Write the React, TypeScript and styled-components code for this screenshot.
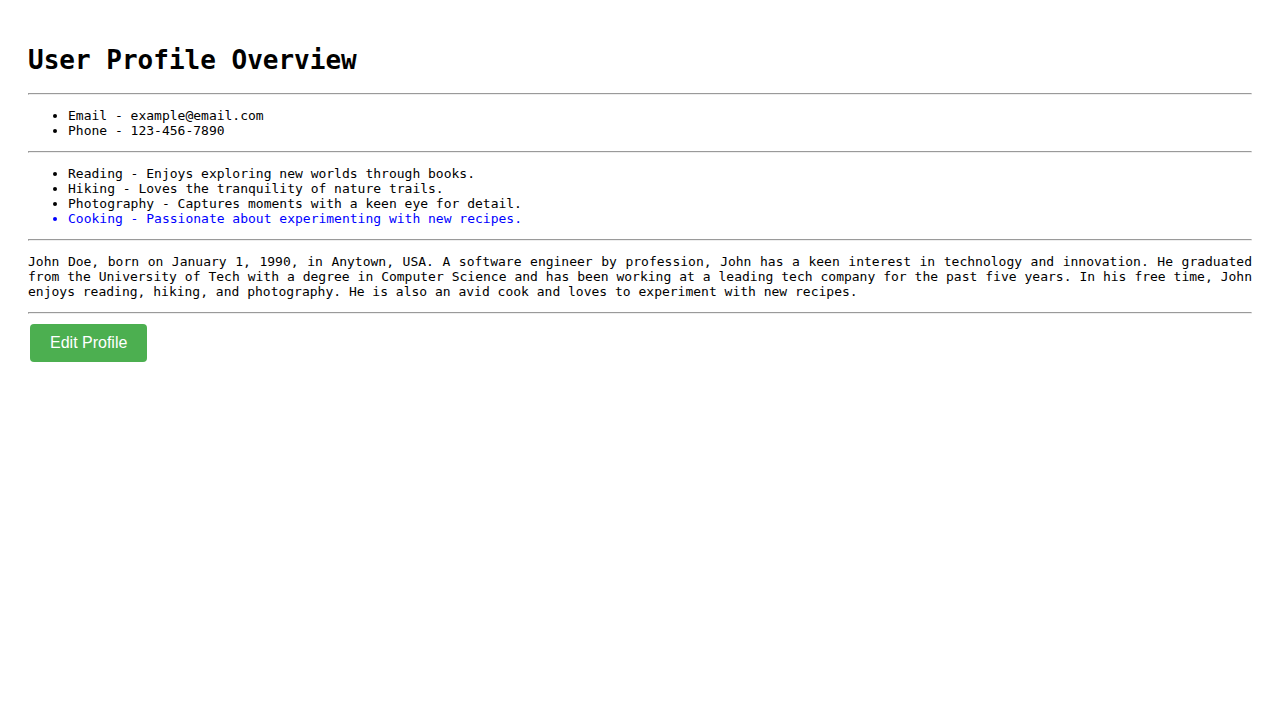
import React from 'react';
import styled, { createGlobalStyle } from 'styled-components';

interface Hobby {
  name: string;
  description: string;
  highlight?: boolean;
}

const hobbies: Hobby[] = [
  { name: 'Reading', description: 'Enjoys exploring new worlds through books.' },
  { name: 'Hiking', description: 'Loves the tranquility of nature trails.' },
  { name: 'Photography', description: 'Captures moments with a keen eye for detail.' },
  { name: 'Cooking', description: 'Passionate about experimenting with new recipes.', highlight: true },
];

const App: React.FunctionComponent = (): React.ReactElement => (
  <>
    <GlobalStyle />
    <Container>
      <Title>User Profile Overview</Title>
      <Divider />
      <List>
        <Item>Email - example@email.com</Item>
        <Item>Phone - 123-456-7890</Item>
      </List>
      <Divider />
      <List>
        {hobbies.map((hobby: Hobby) => (
          <Item key={hobby.name} $highlight={hobby.highlight}>
            {hobby.name} - {hobby.description}
          </Item>
        ))}
      </List>
      <Divider />
      <Bio>
        John Doe, born on January 1, 1990, in Anytown, USA. A software engineer by profession, John has a keen
        interest in technology and innovation. He graduated from the University of Tech with a degree in Computer
        Science and has been working at a leading tech company for the past five years. In his free time, John
        enjoys reading, hiking, and photography. He is also an avid cook and loves to experiment with new recipes.
      </Bio>
      <Divider />
      <EditButton type="button">Edit Profile</EditButton>
    </Container>
  </>
);

export default App;

// Styled components

const GlobalStyle = createGlobalStyle`
  body {
    margin: 8px;
    background: #fff;
    color: #000;
    font-family: 'DejaVu Sans Mono', monospace;
    font-size: 13px;
  }
`;

const Container = styled('div')`
  padding: 20px;
`;

const Title = styled('h1')`
  font-size: 26px;
  font-weight: bold;
  margin: 0.67em 0;
`;

const Divider = styled('hr')`
  margin: 6.5px 0;
`;

const List = styled('ul')`
  margin: 13px 0;
  padding-left: 40px;
  line-height: 15px;
`;

const Item = styled('li')<{ $highlight?: boolean }>`
  color: ${(p) => (p.$highlight ? '#0000ff' : '#000')};
`;

const Bio = styled('p')`
  margin: 13px 0;
  line-height: 15px;
  text-align: justify;
`;

const EditButton = styled('button')`
  margin: 3.5px 2px;
  padding: 10px 20px;
  border: none;
  border-radius: 4px;
  background: #4caf50;
  color: #fff;
  font-family: 'Liberation Sans', Arial, sans-serif;
  font-size: 16px;
  cursor: pointer;
`;
